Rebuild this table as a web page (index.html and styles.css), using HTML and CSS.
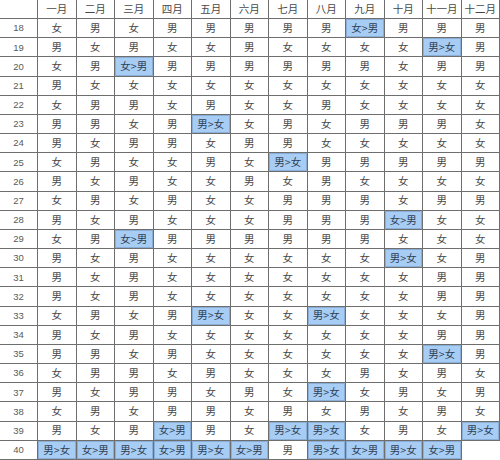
FILE: index.html
```html
<!DOCTYPE html>
<html lang="zh">
<head>
<meta charset="utf-8">
<link rel="stylesheet" href="styles.css">
</head>
<body>
<div class="grid">
<div class="c n"></div><div class="c">一月</div><div class="c">二月</div><div class="c">三月</div><div class="c">四月</div><div class="c">五月</div><div class="c">六月</div><div class="c">七月</div><div class="c">八月</div><div class="c">九月</div><div class="c">十月</div><div class="c">十一月</div><div class="c">十二月</div>
<div class="c n">18</div><div class="c">女</div><div class="c">男</div><div class="c">女</div><div class="c">男</div><div class="c">男</div><div class="c">男</div><div class="c">男</div><div class="c">男</div><div class="c hl">女&gt;男</div><div class="c">男</div><div class="c">男</div><div class="c">男</div>
<div class="c n">19</div><div class="c">男</div><div class="c">女</div><div class="c">男</div><div class="c">女</div><div class="c">女</div><div class="c">男</div><div class="c">女</div><div class="c">女</div><div class="c">女</div><div class="c">女</div><div class="c hl">男&gt;女</div><div class="c">男</div>
<div class="c n">20</div><div class="c">女</div><div class="c">男</div><div class="c hl">女&gt;男</div><div class="c">男</div><div class="c">男</div><div class="c">男</div><div class="c">男</div><div class="c">男</div><div class="c">男</div><div class="c">女</div><div class="c">男</div><div class="c">男</div>
<div class="c n">21</div><div class="c">男</div><div class="c">女</div><div class="c">女</div><div class="c">女</div><div class="c">女</div><div class="c">女</div><div class="c">女</div><div class="c">女</div><div class="c">女</div><div class="c">女</div><div class="c">女</div><div class="c">女</div>
<div class="c n">22</div><div class="c">女</div><div class="c">男</div><div class="c">男</div><div class="c">女</div><div class="c">男</div><div class="c">女</div><div class="c">女</div><div class="c">男</div><div class="c">女</div><div class="c">女</div><div class="c">女</div><div class="c">女</div>
<div class="c n">23</div><div class="c">男</div><div class="c">男</div><div class="c">女</div><div class="c">男</div><div class="c hl">男&gt;女</div><div class="c">女</div><div class="c">男</div><div class="c">女</div><div class="c">男</div><div class="c">男</div><div class="c">男</div><div class="c">女</div>
<div class="c n">24</div><div class="c">男</div><div class="c">女</div><div class="c">男</div><div class="c">男</div><div class="c">女</div><div class="c">男</div><div class="c">男</div><div class="c">女</div><div class="c">女</div><div class="c">女</div><div class="c">女</div><div class="c">女</div>
<div class="c n">25</div><div class="c">女</div><div class="c">男</div><div class="c">女</div><div class="c">女</div><div class="c">男</div><div class="c">女</div><div class="c hl">男&gt;女</div><div class="c">男</div><div class="c">男</div><div class="c">男</div><div class="c">男</div><div class="c">男</div>
<div class="c n">26</div><div class="c">男</div><div class="c">女</div><div class="c">男</div><div class="c">女</div><div class="c">女</div><div class="c">男</div><div class="c">女</div><div class="c">男</div><div class="c">女</div><div class="c">女</div><div class="c">女</div><div class="c">女</div>
<div class="c n">27</div><div class="c">女</div><div class="c">男</div><div class="c">女</div><div class="c">男</div><div class="c">女</div><div class="c">女</div><div class="c">男</div><div class="c">男</div><div class="c">男</div><div class="c">女</div><div class="c">男</div><div class="c">男</div>
<div class="c n">28</div><div class="c">男</div><div class="c">女</div><div class="c">男</div><div class="c">女</div><div class="c">女</div><div class="c">女</div><div class="c">男</div><div class="c">男</div><div class="c">男</div><div class="c hl">女&gt;男</div><div class="c">女</div><div class="c">女</div>
<div class="c n">29</div><div class="c">女</div><div class="c">男</div><div class="c hl">女&gt;男</div><div class="c">男</div><div class="c">男</div><div class="c">男</div><div class="c">男</div><div class="c">男</div><div class="c">男</div><div class="c">女</div><div class="c">女</div><div class="c">女</div>
<div class="c n">30</div><div class="c">男</div><div class="c">女</div><div class="c">男</div><div class="c">女</div><div class="c">女</div><div class="c">女</div><div class="c">女</div><div class="c">女</div><div class="c">女</div><div class="c hl">男&gt;女</div><div class="c">女</div><div class="c">男</div>
<div class="c n">31</div><div class="c">男</div><div class="c">女</div><div class="c">男</div><div class="c">女</div><div class="c">女</div><div class="c">女</div><div class="c">女</div><div class="c">女</div><div class="c">女</div><div class="c">女</div><div class="c">男</div><div class="c">男</div>
<div class="c n">32</div><div class="c">男</div><div class="c">女</div><div class="c">男</div><div class="c">女</div><div class="c">女</div><div class="c">女</div><div class="c">女</div><div class="c">女</div><div class="c">女</div><div class="c">女</div><div class="c">男</div><div class="c">男</div>
<div class="c n">33</div><div class="c">女</div><div class="c">男</div><div class="c">女</div><div class="c">男</div><div class="c hl">男&gt;女</div><div class="c">女</div><div class="c">女</div><div class="c hl">男&gt;女</div><div class="c">女</div><div class="c">女</div><div class="c">女</div><div class="c">男</div>
<div class="c n">34</div><div class="c">男</div><div class="c">女</div><div class="c">男</div><div class="c">女</div><div class="c">女</div><div class="c">女</div><div class="c">女</div><div class="c">女</div><div class="c">女</div><div class="c">女</div><div class="c">男</div><div class="c">男</div>
<div class="c n">35</div><div class="c">男</div><div class="c">男</div><div class="c">女</div><div class="c">男</div><div class="c">女</div><div class="c">女</div><div class="c">女</div><div class="c">女</div><div class="c">女</div><div class="c">女</div><div class="c hl">男&gt;女</div><div class="c">男</div>
<div class="c n">36</div><div class="c">女</div><div class="c">男</div><div class="c">男</div><div class="c">女</div><div class="c">男</div><div class="c">女</div><div class="c">女</div><div class="c">女</div><div class="c">男</div><div class="c">女</div><div class="c">男</div><div class="c">女</div>
<div class="c n">37</div><div class="c">男</div><div class="c">女</div><div class="c">男</div><div class="c">男</div><div class="c">女</div><div class="c">男</div><div class="c">女</div><div class="c hl">男&gt;女</div><div class="c">女</div><div class="c">男</div><div class="c">女</div><div class="c">男</div>
<div class="c n">38</div><div class="c">女</div><div class="c">男</div><div class="c">女</div><div class="c">男</div><div class="c">男</div><div class="c">女</div><div class="c">男</div><div class="c">女</div><div class="c">男</div><div class="c">女</div><div class="c">男</div><div class="c">女</div>
<div class="c n">39</div><div class="c">男</div><div class="c">女</div><div class="c">男</div><div class="c hl">女&gt;男</div><div class="c">男</div><div class="c">女</div><div class="c hl">男&gt;女</div><div class="c hl">男&gt;女</div><div class="c">女</div><div class="c">男</div><div class="c">女</div><div class="c hl">男&gt;女</div>
<div class="c n">40</div><div class="c hl">男&gt;女</div><div class="c hl">女&gt;男</div><div class="c hl">男&gt;女</div><div class="c hl">女&gt;男</div><div class="c hl">男&gt;女</div><div class="c hl">女&gt;男</div><div class="c">男</div><div class="c hl">男&gt;女</div><div class="c hl">女&gt;男</div><div class="c hl">男&gt;女</div><div class="c hl">女&gt;男</div><div class="c blank"></div>
</div>
</body>
</html>
```

FILE: styles.css
```css
html, body {
  margin: 0;
  padding: 0;
  background: #ffffff;
}
.grid {
  width: 500px;
  height: 460px;
  display: grid;
  grid-template-columns: 38px repeat(12, 1fr);
  grid-template-rows: repeat(24, 1fr);
  font-family: "Noto Sans CJK SC", "Liberation Sans", sans-serif;
  font-size: 10.5px;
  color: #484848;
}
.c {
  box-sizing: border-box;
  border-right: 1px solid #6e6e6e;
  border-bottom: 1px solid #6e6e6e;
  display: flex;
  align-items: center;
  justify-content: center;
  line-height: 1;
  white-space: nowrap;
}
.n {
  font-family: "Liberation Sans", sans-serif;
  font-size: 9.5px;
  color: #5a5a5a;
}
.hl {
  background: #a8cdf4;
  color: #2f3f55;
  box-shadow: inset 0 0 0 1px #8aaed6;
}
.blank {
  border-right: none;
  border-bottom: none;
}
```
